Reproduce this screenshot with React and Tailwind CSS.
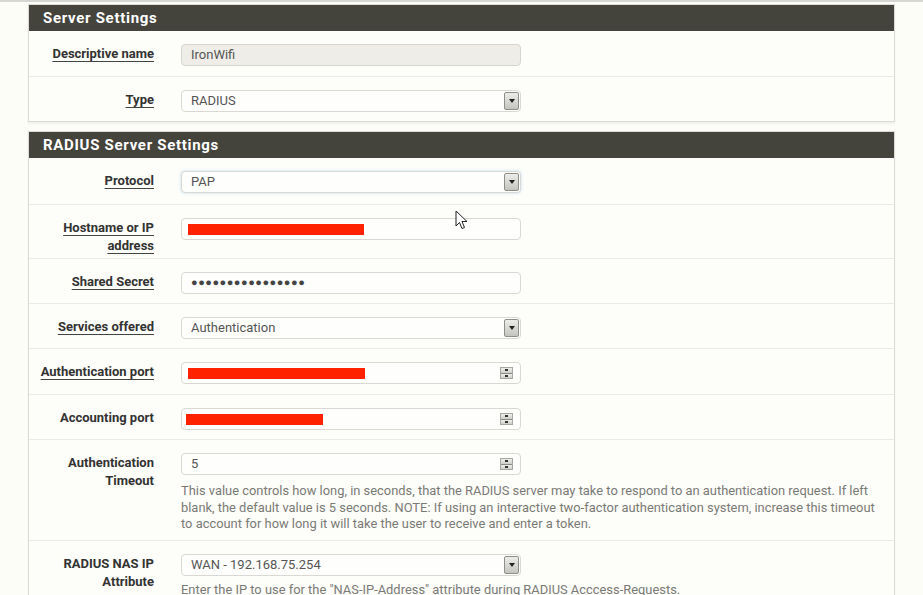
import React from "react";

const font = { fontFamily: "Roboto, 'Liberation Sans', Arial, sans-serif" };

function Label({ children, underline = true }) {
  return (
    <div className="w-[125px] shrink-0 text-right pt-[1px] text-[13px] leading-[18px] font-bold text-[#333]">
      <span className={underline ? "underline decoration-[#444] underline-offset-[3px]" : ""}>{children}</span>
    </div>
  );
}

function SelectArrow() {
  return (
    <div className="absolute right-[1px] top-[1px] bottom-[1px] w-[15px] bg-gradient-to-b from-[#ececea] to-[#c4c4bf] border border-[#8f8f89] rounded-[2px] flex items-center justify-center">
      <div className="w-0 h-0 border-l-[3px] border-r-[3px] border-t-[4px] border-l-transparent border-r-transparent border-t-[#222]" />
    </div>
  );
}

function Spinner() {
  return (
    <div className="absolute right-[7px] top-[4px] bottom-[4px] w-[13px] flex flex-col border border-[#a8a8a2]">
      <div className="flex-1 bg-gradient-to-b from-[#eeeeea] to-[#cfcfca] flex items-center justify-center border-b border-[#8a8a84]">
        <div className="w-[3px] h-[2px] bg-[#333]" />
      </div>
      <div className="flex-1 bg-gradient-to-b from-[#eeeeea] to-[#cfcfca] flex items-center justify-center">
        <div className="w-[3px] h-[2px] bg-[#333]" />
      </div>
    </div>
  );
}

function Input({ children, kind, disabled, focus }) {
  return (
    <div
      className={
        "relative w-[340px] h-[22px] rounded-[4px] border flex items-center pl-[9px] text-[13px] text-[#555] " +
        (disabled ? "bg-[#eeede7] border-[#d6d5cf] " : "bg-[#fefefc] border-[#d9d8d2] ") +
        (focus ? "border-[#8fbfe4] shadow-[0_0_3px_#b9dcf5] " : "")
      }
    >
      {children}
      {kind === "select" && <SelectArrow />}
      {kind === "number" && <Spinner />}
    </div>
  );
}

function Redact({ w, ml = 6 }) {
  return <div className="h-[11px] bg-[#ff2200]" style={{ width: w, marginLeft: ml - 9 }} />;
}

function Row({ label, underline, h, children, help, first }) {
  return (
    <div
      className={"flex pt-[13px] " + (first ? "" : "border-t border-[#ebeae4]")}
      style={{ height: h }}
    >
      <Label underline={underline}>{label}</Label>
      <div className="ml-[27px]">
        {children}
        {help && (
          <div className="mt-[8px] text-[12.9px] leading-[16.5px] text-[#7a7a76] whitespace-nowrap">{help}</div>
        )}
      </div>
    </div>
  );
}

function Panel({ title, children }) {
  return (
    <div className="border border-[#dcdbd5] bg-[#fdfdf9] shadow-[0_2px_2px_rgba(0,0,0,0.05)]">
      <div className="h-[26px] bg-[#44433c] flex items-center pl-[14px] text-white font-bold text-[15px] tracking-[0.7px]">
        {title}
      </div>
      {children}
    </div>
  );
}

export default function App() {
  return (
    <div style={font} className="relative w-[923px] h-[595px] overflow-hidden bg-[#fdfdf8]">
      <div className="h-[2px] bg-[#d6d6d2]" />
      <div className="pt-[2px] pl-[28px] w-[895px]">
        <Panel title="Server Settings">
          <Row label="Descriptive name" h={45} first>
            <Input disabled>IronWifi</Input>
          </Row>
          <Row label="Type" h={45}>
            <Input kind="select">RADIUS</Input>
          </Row>
        </Panel>
        <div className="h-[9px]" />
        <Panel title="RADIUS Server Settings">
          <Row label="Protocol" h={46} first>
            <Input kind="select" focus>PAP</Input>
          </Row>
          <Row label={<>Hostname or IP<br />address</>} h={54}>
            <Input>
              <Redact w={176} ml={6} />
            </Input>
          </Row>
          <Row label="Shared Secret" h={45}>
            <Input>
              <span className="tracking-[0.5px] text-[#444] text-[11px]">●●●●●●●●●●●●●●●●</span>
            </Input>
          </Row>
          <Row label="Services offered" h={45}>
            <Input kind="select">Authentication</Input>
          </Row>
          <Row label="Authentication port" h={46}>
            <Input kind="number">
              <Redact w={177} ml={6} />
            </Input>
          </Row>
          <Row label="Accounting port" underline={false} h={45}>
            <Input kind="number">
              <Redact w={137} ml={4} />
            </Input>
          </Row>
          <Row
            label={<>Authentication<br />Timeout</>}
            underline={false}
            h={101}
            help={
              <>
                This value controls how long, in seconds, that the RADIUS server may take to respond to an authentication request. If left
                <br />
                blank, the default value is 5 seconds. NOTE: If using an interactive two-factor authentication system, increase this timeout
                <br />
                to account for how long it will take the user to receive and enter a token.
              </>
            }
          >
            <Input kind="number">5</Input>
          </Row>
          <Row
            label={<>RADIUS NAS IP<br />Attribute</>}
            underline={false}
            h={80}
            help={<span className="relative top-[-2px]">Enter the IP to use for the "NAS-IP-Address" attribute during RADIUS Acccess-Requests.</span>}
          >
            <Input kind="select">WAN - 192.168.75.254</Input>
          </Row>
        </Panel>
      </div>
      <svg className="absolute left-[455px] top-[210px]" width="14" height="20" viewBox="0 0 14 20">
        <path d="M1 1 L1 16 L4.5 12.5 L7 18.5 L9.5 17.5 L7 11.5 L12 11.5 Z" fill="#fff" stroke="#222" strokeWidth="1" strokeLinejoin="round" />
      </svg>
    </div>
  );
}
